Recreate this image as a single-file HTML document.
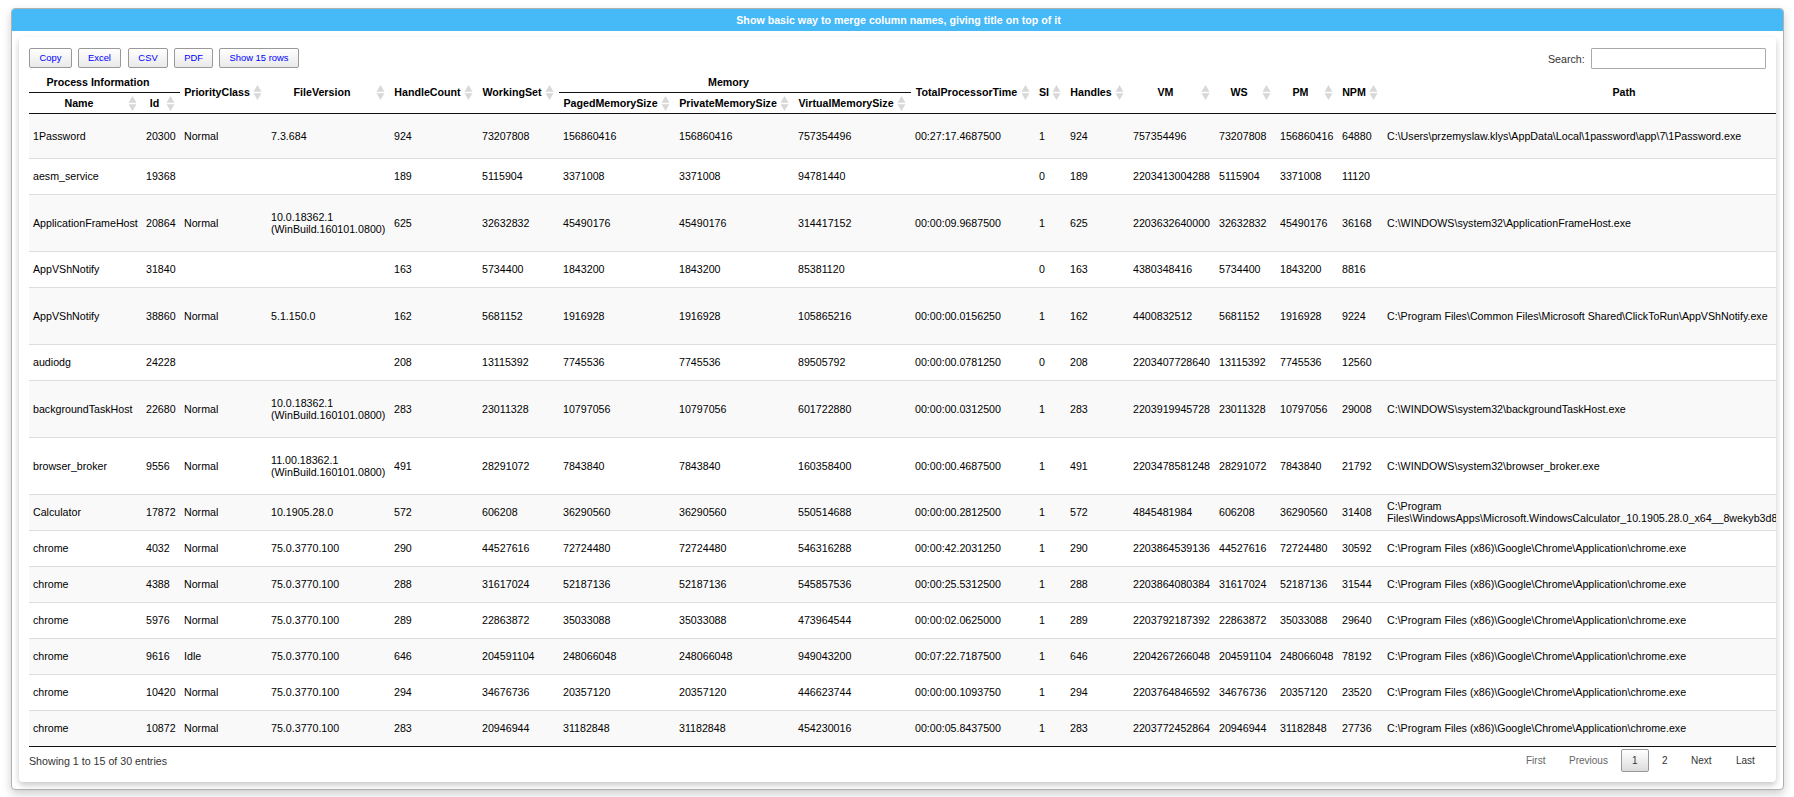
<!DOCTYPE html><html><head><meta charset="utf-8"><title>Table</title><style>
*{box-sizing:border-box}
html,body{margin:0;padding:0;background:#fff;width:1794px;height:797px;overflow:hidden;font-family:"Liberation Sans",sans-serif;}
.outer{position:absolute;left:11px;top:8px;width:1773px;height:782px;border:1px solid #b0b0b0;border-radius:4px;
 box-shadow:0 4px 10px rgba(0,0,0,.2);background:#fff;overflow:hidden}
.head{position:absolute;left:0;top:0;width:100%;height:22px;background:#46b9f7;color:#fff;font-weight:bold;font-size:10.667px;
 text-align:center;line-height:22px;padding-left:2px}
.inner{position:absolute;left:19px;top:37px;width:1757px;height:745px;border-radius:4px;background:#fff;
 box-shadow:0 3px 6px rgba(0,0,0,.09),0 3px 6px rgba(0,0,0,.14)}
.btn{position:absolute;top:48px;height:20px;border:1px solid #999;border-radius:2px;background:linear-gradient(to bottom,#fff 0%,#e9e9e9 100%);
 color:#0000ff;font-size:9.39px;text-align:center;line-height:17px;white-space:nowrap}
.lbl{position:absolute;font-size:10.667px;color:#333;white-space:nowrap}
.search{position:absolute;left:1591px;top:48px;width:175px;height:21px;border:1px solid #aaa;border-radius:1px;background:#fff}
.tw{position:absolute;left:29px;top:72px;width:1747px;height:675px;overflow:hidden}
table{border-collapse:separate;border-spacing:0;table-layout:fixed;font-size:10.667px;color:#000;}
td{padding:0 4px;vertical-align:top;border-top:1px solid #ddd;line-height:12px;white-space:normal;overflow:hidden}
tr.odd td{background:#f9f9f9}
tr.first td{border-top:none}
.th{position:absolute;font-weight:bold;font-size:10.667px;text-align:center;white-space:nowrap;line-height:12px;height:12px}
.hl{position:absolute;height:1px;background:#111}
.pg{position:absolute;font-size:10px;color:#333;white-space:nowrap}
</style></head><body>
<div class="outer"><div class="head">Show basic way to merge column names, giving title on top of it</div></div>
<div class="inner"></div>
<div class="btn" style="left:29px;width:43px">Copy</div>
<div class="btn" style="left:78px;width:43px">Excel</div>
<div class="btn" style="left:128px;width:40px">CSV</div>
<div class="btn" style="left:174px;width:39px">PDF</div>
<div class="btn" style="left:219px;width:80px">Show 15 rows</div>
<div class="lbl" style="left:1548px;top:53px">Search:</div>
<div class="search"></div>
<div class="th" style="left:33px;top:76px;width:130px">Process Information</div>
<div class="hl" style="left:29px;top:92px;width:151px"></div>
<div class="th" style="left:33px;top:97px;width:92px">Name</div><svg style="position:absolute;left:123px;top:94px" width="19" height="19" viewBox="0 0 19 19"><path d="M5.5 8.8 L13.5 8.8 L9.5 2 Z M5.5 10.2 L13.5 10.2 L9.5 17 Z" fill="#d8d8d8"/></svg>
<div class="th" style="left:146px;top:97px;width:17px">Id</div><svg style="position:absolute;left:161px;top:94px" width="19" height="19" viewBox="0 0 19 19"><path d="M5.5 8.8 L13.5 8.8 L9.5 2 Z M5.5 10.2 L13.5 10.2 L9.5 17 Z" fill="#d8d8d8"/></svg>
<div class="th" style="left:184px;top:86px;width:66px">PriorityClass</div><svg style="position:absolute;left:248px;top:83px" width="19" height="19" viewBox="0 0 19 19"><path d="M5.5 8.8 L13.5 8.8 L9.5 2 Z M5.5 10.2 L13.5 10.2 L9.5 17 Z" fill="#d8d8d8"/></svg>
<div class="th" style="left:271px;top:86px;width:102px">FileVersion</div><svg style="position:absolute;left:371px;top:83px" width="19" height="19" viewBox="0 0 19 19"><path d="M5.5 8.8 L13.5 8.8 L9.5 2 Z M5.5 10.2 L13.5 10.2 L9.5 17 Z" fill="#d8d8d8"/></svg>
<div class="th" style="left:394px;top:86px;width:67px">HandleCount</div><svg style="position:absolute;left:459px;top:83px" width="19" height="19" viewBox="0 0 19 19"><path d="M5.5 8.8 L13.5 8.8 L9.5 2 Z M5.5 10.2 L13.5 10.2 L9.5 17 Z" fill="#d8d8d8"/></svg>
<div class="th" style="left:482px;top:86px;width:60px">WorkingSet</div><svg style="position:absolute;left:540px;top:83px" width="19" height="19" viewBox="0 0 19 19"><path d="M5.5 8.8 L13.5 8.8 L9.5 2 Z M5.5 10.2 L13.5 10.2 L9.5 17 Z" fill="#d8d8d8"/></svg>
<div class="th" style="left:563px;top:76px;width:331px">Memory</div>
<div class="hl" style="left:559px;top:92px;width:352px"></div>
<div class="th" style="left:563px;top:97px;width:95px">PagedMemorySize</div><svg style="position:absolute;left:656px;top:94px" width="19" height="19" viewBox="0 0 19 19"><path d="M5.5 8.8 L13.5 8.8 L9.5 2 Z M5.5 10.2 L13.5 10.2 L9.5 17 Z" fill="#d8d8d8"/></svg>
<div class="th" style="left:679px;top:97px;width:98px">PrivateMemorySize</div><svg style="position:absolute;left:775px;top:94px" width="19" height="19" viewBox="0 0 19 19"><path d="M5.5 8.8 L13.5 8.8 L9.5 2 Z M5.5 10.2 L13.5 10.2 L9.5 17 Z" fill="#d8d8d8"/></svg>
<div class="th" style="left:798px;top:97px;width:96px">VirtualMemorySize</div><svg style="position:absolute;left:892px;top:94px" width="19" height="19" viewBox="0 0 19 19"><path d="M5.5 8.8 L13.5 8.8 L9.5 2 Z M5.5 10.2 L13.5 10.2 L9.5 17 Z" fill="#d8d8d8"/></svg>
<div class="th" style="left:915px;top:86px;width:103px">TotalProcessorTime</div><svg style="position:absolute;left:1016px;top:83px" width="19" height="19" viewBox="0 0 19 19"><path d="M5.5 8.8 L13.5 8.8 L9.5 2 Z M5.5 10.2 L13.5 10.2 L9.5 17 Z" fill="#d8d8d8"/></svg>
<div class="th" style="left:1039px;top:86px;width:10px">SI</div><svg style="position:absolute;left:1047px;top:83px" width="19" height="19" viewBox="0 0 19 19"><path d="M5.5 8.8 L13.5 8.8 L9.5 2 Z M5.5 10.2 L13.5 10.2 L9.5 17 Z" fill="#d8d8d8"/></svg>
<div class="th" style="left:1070px;top:86px;width:42px">Handles</div><svg style="position:absolute;left:1110px;top:83px" width="19" height="19" viewBox="0 0 19 19"><path d="M5.5 8.8 L13.5 8.8 L9.5 2 Z M5.5 10.2 L13.5 10.2 L9.5 17 Z" fill="#d8d8d8"/></svg>
<div class="th" style="left:1133px;top:86px;width:65px">VM</div><svg style="position:absolute;left:1196px;top:83px" width="19" height="19" viewBox="0 0 19 19"><path d="M5.5 8.8 L13.5 8.8 L9.5 2 Z M5.5 10.2 L13.5 10.2 L9.5 17 Z" fill="#d8d8d8"/></svg>
<div class="th" style="left:1219px;top:86px;width:40px">WS</div><svg style="position:absolute;left:1257px;top:83px" width="19" height="19" viewBox="0 0 19 19"><path d="M5.5 8.8 L13.5 8.8 L9.5 2 Z M5.5 10.2 L13.5 10.2 L9.5 17 Z" fill="#d8d8d8"/></svg>
<div class="th" style="left:1280px;top:86px;width:41px">PM</div><svg style="position:absolute;left:1319px;top:83px" width="19" height="19" viewBox="0 0 19 19"><path d="M5.5 8.8 L13.5 8.8 L9.5 2 Z M5.5 10.2 L13.5 10.2 L9.5 17 Z" fill="#d8d8d8"/></svg>
<div class="th" style="left:1342px;top:86px;width:24px">NPM</div><svg style="position:absolute;left:1364px;top:83px" width="19" height="19" viewBox="0 0 19 19"><path d="M5.5 8.8 L13.5 8.8 L9.5 2 Z M5.5 10.2 L13.5 10.2 L9.5 17 Z" fill="#d8d8d8"/></svg>
<div class="th" style="left:1387px;top:86px;width:474px">Path</div>
<div class="hl" style="left:29px;top:113px;width:1747px"></div>
<div class="tw" style="top:114px;height:632px">
<table style="width:1849px"><colgroup><col style="width:113px"><col style="width:38px"><col style="width:87px"><col style="width:123px"><col style="width:88px"><col style="width:81px"><col style="width:116px"><col style="width:119px"><col style="width:117px"><col style="width:124px"><col style="width:31px"><col style="width:63px"><col style="width:86px"><col style="width:61px"><col style="width:62px"><col style="width:45px"><col style="width:495px"></colgroup><tbody>
<tr class="odd first" style="height:44px"><td style="padding-top:16px">1Password</td><td style="padding-top:16px">20300</td><td style="padding-top:16px">Normal</td><td style="padding-top:16px">7.3.684</td><td style="padding-top:16px">924</td><td style="padding-top:16px">73207808</td><td style="padding-top:16px">156860416</td><td style="padding-top:16px">156860416</td><td style="padding-top:16px">757354496</td><td style="padding-top:16px">00:27:17.4687500</td><td style="padding-top:16px">1</td><td style="padding-top:16px">924</td><td style="padding-top:16px">757354496</td><td style="padding-top:16px">73207808</td><td style="padding-top:16px">156860416</td><td style="padding-top:16px">64880</td><td style="padding-top:16px">C:&#92;Users&#92;przemyslaw.klys&#92;AppData&#92;Local&#92;1password&#92;app&#92;7&#92;1Password.exe</td></tr>
<tr class="even" style="height:36px"><td style="padding-top:11px">aesm_service</td><td style="padding-top:11px">19368</td><td style="padding-top:11px"></td><td style="padding-top:11px"></td><td style="padding-top:11px">189</td><td style="padding-top:11px">5115904</td><td style="padding-top:11px">3371008</td><td style="padding-top:11px">3371008</td><td style="padding-top:11px">94781440</td><td style="padding-top:11px"></td><td style="padding-top:11px">0</td><td style="padding-top:11px">189</td><td style="padding-top:11px">2203413004288</td><td style="padding-top:11px">5115904</td><td style="padding-top:11px">3371008</td><td style="padding-top:11px">11120</td><td style="padding-top:11px"></td></tr>
<tr class="odd" style="height:57px"><td style="padding-top:22px">ApplicationFrameHost</td><td style="padding-top:22px">20864</td><td style="padding-top:22px">Normal</td><td style="padding-top:16px">10.0.18362.1 (WinBuild.160101.0800)</td><td style="padding-top:22px">625</td><td style="padding-top:22px">32632832</td><td style="padding-top:22px">45490176</td><td style="padding-top:22px">45490176</td><td style="padding-top:22px">314417152</td><td style="padding-top:22px">00:00:09.9687500</td><td style="padding-top:22px">1</td><td style="padding-top:22px">625</td><td style="padding-top:22px">2203632640000</td><td style="padding-top:22px">32632832</td><td style="padding-top:22px">45490176</td><td style="padding-top:22px">36168</td><td style="padding-top:22px">C:&#92;WINDOWS&#92;system32&#92;ApplicationFrameHost.exe</td></tr>
<tr class="even" style="height:36px"><td style="padding-top:11px">AppVShNotify</td><td style="padding-top:11px">31840</td><td style="padding-top:11px"></td><td style="padding-top:11px"></td><td style="padding-top:11px">163</td><td style="padding-top:11px">5734400</td><td style="padding-top:11px">1843200</td><td style="padding-top:11px">1843200</td><td style="padding-top:11px">85381120</td><td style="padding-top:11px"></td><td style="padding-top:11px">0</td><td style="padding-top:11px">163</td><td style="padding-top:11px">4380348416</td><td style="padding-top:11px">5734400</td><td style="padding-top:11px">1843200</td><td style="padding-top:11px">8816</td><td style="padding-top:11px"></td></tr>
<tr class="odd" style="height:57px"><td style="padding-top:22px">AppVShNotify</td><td style="padding-top:22px">38860</td><td style="padding-top:22px">Normal</td><td style="padding-top:22px">5.1.150.0</td><td style="padding-top:22px">162</td><td style="padding-top:22px">5681152</td><td style="padding-top:22px">1916928</td><td style="padding-top:22px">1916928</td><td style="padding-top:22px">105865216</td><td style="padding-top:22px">00:00:00.0156250</td><td style="padding-top:22px">1</td><td style="padding-top:22px">162</td><td style="padding-top:22px">4400832512</td><td style="padding-top:22px">5681152</td><td style="padding-top:22px">1916928</td><td style="padding-top:22px">9224</td><td style="padding-top:22px">C:&#92;Program Files&#92;Common Files&#92;Microsoft Shared&#92;ClickToRun&#92;AppVShNotify.exe</td></tr>
<tr class="even" style="height:36px"><td style="padding-top:11px">audiodg</td><td style="padding-top:11px">24228</td><td style="padding-top:11px"></td><td style="padding-top:11px"></td><td style="padding-top:11px">208</td><td style="padding-top:11px">13115392</td><td style="padding-top:11px">7745536</td><td style="padding-top:11px">7745536</td><td style="padding-top:11px">89505792</td><td style="padding-top:11px">00:00:00.0781250</td><td style="padding-top:11px">0</td><td style="padding-top:11px">208</td><td style="padding-top:11px">2203407728640</td><td style="padding-top:11px">13115392</td><td style="padding-top:11px">7745536</td><td style="padding-top:11px">12560</td><td style="padding-top:11px"></td></tr>
<tr class="odd" style="height:57px"><td style="padding-top:22px">backgroundTaskHost</td><td style="padding-top:22px">22680</td><td style="padding-top:22px">Normal</td><td style="padding-top:16px">10.0.18362.1 (WinBuild.160101.0800)</td><td style="padding-top:22px">283</td><td style="padding-top:22px">23011328</td><td style="padding-top:22px">10797056</td><td style="padding-top:22px">10797056</td><td style="padding-top:22px">601722880</td><td style="padding-top:22px">00:00:00.0312500</td><td style="padding-top:22px">1</td><td style="padding-top:22px">283</td><td style="padding-top:22px">2203919945728</td><td style="padding-top:22px">23011328</td><td style="padding-top:22px">10797056</td><td style="padding-top:22px">29008</td><td style="padding-top:22px">C:&#92;WINDOWS&#92;system32&#92;backgroundTaskHost.exe</td></tr>
<tr class="even" style="height:57px"><td style="padding-top:22px">browser_broker</td><td style="padding-top:22px">9556</td><td style="padding-top:22px">Normal</td><td style="padding-top:16px">11.00.18362.1 (WinBuild.160101.0800)</td><td style="padding-top:22px">491</td><td style="padding-top:22px">28291072</td><td style="padding-top:22px">7843840</td><td style="padding-top:22px">7843840</td><td style="padding-top:22px">160358400</td><td style="padding-top:22px">00:00:00.4687500</td><td style="padding-top:22px">1</td><td style="padding-top:22px">491</td><td style="padding-top:22px">2203478581248</td><td style="padding-top:22px">28291072</td><td style="padding-top:22px">7843840</td><td style="padding-top:22px">21792</td><td style="padding-top:22px">C:&#92;WINDOWS&#92;system32&#92;browser_broker.exe</td></tr>
<tr class="odd" style="height:36px"><td style="padding-top:11px">Calculator</td><td style="padding-top:11px">17872</td><td style="padding-top:11px">Normal</td><td style="padding-top:11px">10.1905.28.0</td><td style="padding-top:11px">572</td><td style="padding-top:11px">606208</td><td style="padding-top:11px">36290560</td><td style="padding-top:11px">36290560</td><td style="padding-top:11px">550514688</td><td style="padding-top:11px">00:00:00.2812500</td><td style="padding-top:11px">1</td><td style="padding-top:11px">572</td><td style="padding-top:11px">4845481984</td><td style="padding-top:11px">606208</td><td style="padding-top:11px">36290560</td><td style="padding-top:11px">31408</td><td style="padding-top:5px">C:&#92;Program<br>Files&#92;WindowsApps&#92;Microsoft.WindowsCalculator_10.1905.28.0_x64__8wekyb3d8bbwe&#92;Calculator.exe</td></tr>
<tr class="even" style="height:36px"><td style="padding-top:11px">chrome</td><td style="padding-top:11px">4032</td><td style="padding-top:11px">Normal</td><td style="padding-top:11px">75.0.3770.100</td><td style="padding-top:11px">290</td><td style="padding-top:11px">44527616</td><td style="padding-top:11px">72724480</td><td style="padding-top:11px">72724480</td><td style="padding-top:11px">546316288</td><td style="padding-top:11px">00:00:42.2031250</td><td style="padding-top:11px">1</td><td style="padding-top:11px">290</td><td style="padding-top:11px">2203864539136</td><td style="padding-top:11px">44527616</td><td style="padding-top:11px">72724480</td><td style="padding-top:11px">30592</td><td style="padding-top:11px">C:&#92;Program Files (x86)&#92;Google&#92;Chrome&#92;Application&#92;chrome.exe</td></tr>
<tr class="odd" style="height:36px"><td style="padding-top:11px">chrome</td><td style="padding-top:11px">4388</td><td style="padding-top:11px">Normal</td><td style="padding-top:11px">75.0.3770.100</td><td style="padding-top:11px">288</td><td style="padding-top:11px">31617024</td><td style="padding-top:11px">52187136</td><td style="padding-top:11px">52187136</td><td style="padding-top:11px">545857536</td><td style="padding-top:11px">00:00:25.5312500</td><td style="padding-top:11px">1</td><td style="padding-top:11px">288</td><td style="padding-top:11px">2203864080384</td><td style="padding-top:11px">31617024</td><td style="padding-top:11px">52187136</td><td style="padding-top:11px">31544</td><td style="padding-top:11px">C:&#92;Program Files (x86)&#92;Google&#92;Chrome&#92;Application&#92;chrome.exe</td></tr>
<tr class="even" style="height:36px"><td style="padding-top:11px">chrome</td><td style="padding-top:11px">5976</td><td style="padding-top:11px">Normal</td><td style="padding-top:11px">75.0.3770.100</td><td style="padding-top:11px">289</td><td style="padding-top:11px">22863872</td><td style="padding-top:11px">35033088</td><td style="padding-top:11px">35033088</td><td style="padding-top:11px">473964544</td><td style="padding-top:11px">00:00:02.0625000</td><td style="padding-top:11px">1</td><td style="padding-top:11px">289</td><td style="padding-top:11px">2203792187392</td><td style="padding-top:11px">22863872</td><td style="padding-top:11px">35033088</td><td style="padding-top:11px">29640</td><td style="padding-top:11px">C:&#92;Program Files (x86)&#92;Google&#92;Chrome&#92;Application&#92;chrome.exe</td></tr>
<tr class="odd" style="height:36px"><td style="padding-top:11px">chrome</td><td style="padding-top:11px">9616</td><td style="padding-top:11px">Idle</td><td style="padding-top:11px">75.0.3770.100</td><td style="padding-top:11px">646</td><td style="padding-top:11px">204591104</td><td style="padding-top:11px">248066048</td><td style="padding-top:11px">248066048</td><td style="padding-top:11px">949043200</td><td style="padding-top:11px">00:07:22.7187500</td><td style="padding-top:11px">1</td><td style="padding-top:11px">646</td><td style="padding-top:11px">2204267266048</td><td style="padding-top:11px">204591104</td><td style="padding-top:11px">248066048</td><td style="padding-top:11px">78192</td><td style="padding-top:11px">C:&#92;Program Files (x86)&#92;Google&#92;Chrome&#92;Application&#92;chrome.exe</td></tr>
<tr class="even" style="height:36px"><td style="padding-top:11px">chrome</td><td style="padding-top:11px">10420</td><td style="padding-top:11px">Normal</td><td style="padding-top:11px">75.0.3770.100</td><td style="padding-top:11px">294</td><td style="padding-top:11px">34676736</td><td style="padding-top:11px">20357120</td><td style="padding-top:11px">20357120</td><td style="padding-top:11px">446623744</td><td style="padding-top:11px">00:00:00.1093750</td><td style="padding-top:11px">1</td><td style="padding-top:11px">294</td><td style="padding-top:11px">2203764846592</td><td style="padding-top:11px">34676736</td><td style="padding-top:11px">20357120</td><td style="padding-top:11px">23520</td><td style="padding-top:11px">C:&#92;Program Files (x86)&#92;Google&#92;Chrome&#92;Application&#92;chrome.exe</td></tr>
<tr class="odd" style="height:36px"><td style="padding-top:11px">chrome</td><td style="padding-top:11px">10872</td><td style="padding-top:11px">Normal</td><td style="padding-top:11px">75.0.3770.100</td><td style="padding-top:11px">283</td><td style="padding-top:11px">20946944</td><td style="padding-top:11px">31182848</td><td style="padding-top:11px">31182848</td><td style="padding-top:11px">454230016</td><td style="padding-top:11px">00:00:05.8437500</td><td style="padding-top:11px">1</td><td style="padding-top:11px">283</td><td style="padding-top:11px">2203772452864</td><td style="padding-top:11px">20946944</td><td style="padding-top:11px">31182848</td><td style="padding-top:11px">27736</td><td style="padding-top:11px">C:&#92;Program Files (x86)&#92;Google&#92;Chrome&#92;Application&#92;chrome.exe</td></tr>
</tbody></table></div>
<div class="hl" style="left:29px;top:746px;width:1747px"></div>
<div class="lbl" style="left:29px;top:755px">Showing 1 to 15 of 30 entries</div>
<div style="position:absolute;left:1621px;top:749px;width:28px;height:23px;border:1px solid #979797;border-radius:2px;background:linear-gradient(to bottom,#fff 0%,#dcdcdc 100%)"></div>
<div class="pg" style="left:1526px;top:755px;color:#666">First</div>
<div class="pg" style="left:1569px;top:755px;color:#666">Previous</div>
<div class="pg" style="left:1632px;top:755px;color:#333">1</div>
<div class="pg" style="left:1662px;top:755px;color:#333">2</div>
<div class="pg" style="left:1691px;top:755px;color:#333">Next</div>
<div class="pg" style="left:1736px;top:755px;color:#333">Last</div>
</body></html>
